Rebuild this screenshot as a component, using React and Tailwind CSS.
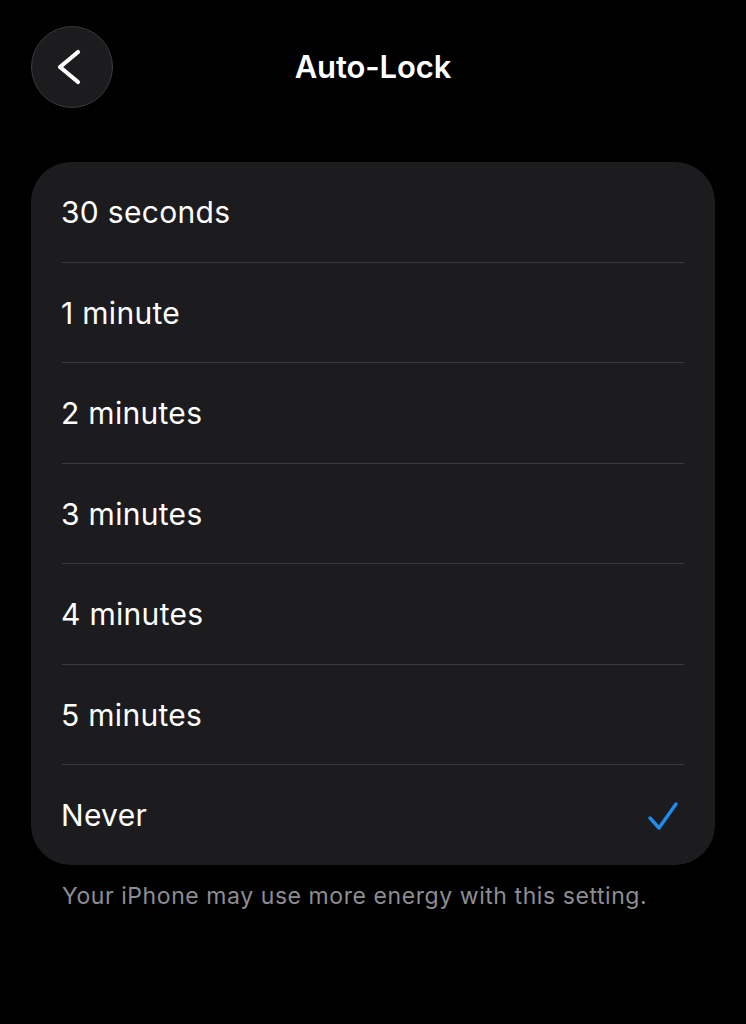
const options = [
  "30 seconds",
  "1 minute",
  "2 minutes",
  "3 minutes",
  "4 minutes",
  "5 minutes",
  "Never",
];

export default function App() {
  const selected = "Never";

  return (
    <div
      className="w-[746px] h-[1024px] bg-black text-white overflow-hidden"
      style={{ fontFamily: "Inter, 'Noto Sans', sans-serif" }}
    >
      {/* Header */}
      <div className="relative h-[134px] flex items-start justify-center pt-[26px]">
        <button className="absolute left-[31px] top-[26px] w-[82px] h-[82px] rounded-full bg-[#1c1c1e] border border-[#3a3a3c]">
          <svg width="82" height="82" viewBox="0 0 82 82" fill="none" className="-m-px">
            <path
              d="M47 26 L29 41 L47 56"
              stroke="white"
              strokeWidth="4.2"
              strokeLinecap="round"
              strokeLinejoin="round"
            />
          </svg>
        </button>
        <h1 className="h-[82px] flex items-center text-[31px] font-semibold tracking-[-0.1px]">
          Auto-Lock
        </h1>
      </div>

      {/* Options card */}
      <div className="mx-[31px] mt-[28px] rounded-[40px] bg-[#1c1c1e] overflow-hidden">
        {options.map((opt, i) => (
          <div key={opt}>
            {i > 0 && <div className="mx-[31px] h-px bg-[#3a3a3c]" />}
            <div className="h-[99.5px] px-[31px] flex items-center justify-between">
              <span className="text-[30px] tracking-[0.3px] pt-[2px] -ml-px">{opt}</span>
              {opt === selected && (
                <svg
                  width="32"
                  height="32"
                  viewBox="0 0 32 32"
                  fill="none"
                  className="mr-[5px]"
                >
                  <path
                    d="M3 19 L12 29 L29 5"
                    stroke="#1e8cf0"
                    strokeWidth="3.4"
                    strokeLinecap="round"
                    strokeLinejoin="round"
                  />
                </svg>
              )}
            </div>
          </div>
        ))}
      </div>

      {/* Footer note */}
      <p className="px-[62px] mt-[14px] text-[23px] text-[#8d8d93] tracking-[0.57px]">
        Your iPhone may use more energy with this setting.
      </p>
    </div>
  );
}
